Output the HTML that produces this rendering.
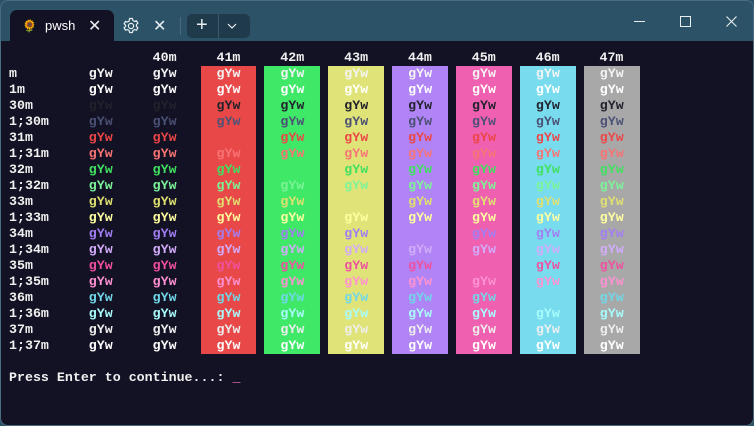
<!DOCTYPE html>
<html><head><meta charset="utf-8"><style>
html,body{margin:0;padding:0;width:754px;height:426px;overflow:hidden;background:#2b5266;}
.win{position:absolute;left:0;top:0;width:752px;height:424px;border:1px solid #4a6c7e;border-radius:8px;background:#2b5266;overflow:hidden;}
.term{position:absolute;left:0;top:40px;width:752px;height:384px;background:#131124;}
.tab{position:absolute;left:9px;top:9px;width:104px;height:32px;background:#131124;border-radius:7px 7px 0 0;}
.tab .t{position:absolute;left:35px;top:8px;color:#fff;font:13px "Liberation Sans",sans-serif;}
.ui{position:absolute;color:#e8eef2;font:15px "Liberation Sans",sans-serif;}
.plus{position:absolute;left:186px;top:13px;width:63px;height:24px;background:#1f3a4a;border-radius:5px;}
pre{position:absolute;left:8px;top:49px;margin:0;font:bold 13.3px/16px "Liberation Mono",monospace;color:#f0f0f0;}
i{font-style:normal}s{text-decoration:none;display:inline-block;height:16px;vertical-align:top}
.a1{background:#e84848}.a2{background:#40e868}.a3{background:#e0e478}.a4{background:#b084f4}.a5{background:#f060b0}.a6{background:#78dcee}.a7{background:#a8a8a8}
.d{color:#f4f4f4}.D{color:#fff}.k0{color:#21222c}.k1{color:#4b5075}.r0{color:#ec4646}.r1{color:#f87474}.g0{color:#40e060}.g1{color:#7cf498}.y0{color:#e0e070}.y1{color:#ffffa0}.b0{color:#a27ef2}.b1{color:#d2acfa}.m0{color:#f050a0}.m1{color:#ff92d2}.c0{color:#70d8e8}.c1{color:#a8fcfc}.w0{color:#eeeeee}.w1{color:#ffffff}
</style></head><body><div class="win">
<div class="tab"><span style="position:absolute;left:12px;top:9px;font-size:12px">🌻</span><span class="t">pwsh</span><span class="ui" style="left:78px;top:6px;font-size:16px">✕</span></div>
<svg style="position:absolute;left:121px;top:16px" width="18" height="18" viewBox="0 0 18 18"><circle cx="9" cy="9" r="2.6" fill="none" stroke="#e8eef2" stroke-width="1.2"/><path d="M7.6 1.5h2.8l.5 2 1.6.9 2-.6 1.4 2.4-1.5 1.4v1.8l1.5 1.4-1.4 2.4-2-.6-1.6.9-.5 2H7.6l-.5-2-1.6-.9-2 .6-1.4-2.4 1.5-1.4V8.2L2.1 6.8l1.4-2.4 2 .6 1.6-.9z" fill="none" stroke="#e8eef2" stroke-width="1.2"/></svg>
<span class="ui" style="left:152px;top:15px;font-size:16px">✕</span>
<div style="position:absolute;left:179px;top:16px;width:1px;height:18px;background:#4a6a7a"></div>
<div class="plus"><span class="ui" style="left:9px;top:0px;font-size:20px">+</span><div style="position:absolute;left:31px;top:0;width:1px;height:24px;background:#3d5a6a"></div><svg style="position:absolute;left:40px;top:9px" width="10" height="6"><path d="M1 1l4 4 4-4" fill="none" stroke="#e8eef2" stroke-width="1.2"/></svg></div>
<div style="position:absolute;left:633px;top:20px;width:11px;height:1px;background:#e8eef2"></div>
<div style="position:absolute;left:679px;top:15px;width:9px;height:9px;border:1px solid #e8eef2"></div>
<svg style="position:absolute;left:725px;top:15px" width="11" height="11"><path d="M0.5 0.5l10 10M10.5 0.5l-10 10" stroke="#e8eef2" stroke-width="1.1"/></svg>
<div class="term"></div>
<pre>                  40m     41m     42m     43m     44m     45m     46m     47m
m         <i class=d>gYw</i>     <i class=d>gYw</i>   <s class=a1>  <i class=d>gYw</i>  </s> <s class=a2>  <i class=d>gYw</i>  </s> <s class=a3>  <i class=d>gYw</i>  </s> <s class=a4>  <i class=d>gYw</i>  </s> <s class=a5>  <i class=d>gYw</i>  </s> <s class=a6>  <i class=d>gYw</i>  </s> <s class=a7>  <i class=d>gYw</i>  </s>
1m        <i class=D>gYw</i>     <i class=D>gYw</i>   <s class=a1>  <i class=D>gYw</i>  </s> <s class=a2>  <i class=D>gYw</i>  </s> <s class=a3>  <i class=D>gYw</i>  </s> <s class=a4>  <i class=D>gYw</i>  </s> <s class=a5>  <i class=D>gYw</i>  </s> <s class=a6>  <i class=D>gYw</i>  </s> <s class=a7>  <i class=D>gYw</i>  </s>
30m       <i class=k0>gYw</i>     <i class=k0>gYw</i>   <s class=a1>  <i class=k0>gYw</i>  </s> <s class=a2>  <i class=k0>gYw</i>  </s> <s class=a3>  <i class=k0>gYw</i>  </s> <s class=a4>  <i class=k0>gYw</i>  </s> <s class=a5>  <i class=k0>gYw</i>  </s> <s class=a6>  <i class=k0>gYw</i>  </s> <s class=a7>  <i class=k0>gYw</i>  </s>
1;30m     <i class=k1>gYw</i>     <i class=k1>gYw</i>   <s class=a1>  <i class=k1>gYw</i>  </s> <s class=a2>  <i class=k1>gYw</i>  </s> <s class=a3>  <i class=k1>gYw</i>  </s> <s class=a4>  <i class=k1>gYw</i>  </s> <s class=a5>  <i class=k1>gYw</i>  </s> <s class=a6>  <i class=k1>gYw</i>  </s> <s class=a7>  <i class=k1>gYw</i>  </s>
31m       <i class=r0>gYw</i>     <i class=r0>gYw</i>   <s class=a1>       </s> <s class=a2>  <i class=r0>gYw</i>  </s> <s class=a3>  <i class=r0>gYw</i>  </s> <s class=a4>  <i class=r0>gYw</i>  </s> <s class=a5>  <i class=r0>gYw</i>  </s> <s class=a6>  <i class=r0>gYw</i>  </s> <s class=a7>  <i class=r0>gYw</i>  </s>
1;31m     <i class=r1>gYw</i>     <i class=r1>gYw</i>   <s class=a1>  <i class=r1>gYw</i>  </s> <s class=a2>  <i class=r1>gYw</i>  </s> <s class=a3>  <i class=r1>gYw</i>  </s> <s class=a4>  <i class=r1>gYw</i>  </s> <s class=a5>  <i class=r1>gYw</i>  </s> <s class=a6>  <i class=r1>gYw</i>  </s> <s class=a7>  <i class=r1>gYw</i>  </s>
32m       <i class=g0>gYw</i>     <i class=g0>gYw</i>   <s class=a1>  <i class=g0>gYw</i>  </s> <s class=a2>       </s> <s class=a3>  <i class=g0>gYw</i>  </s> <s class=a4>  <i class=g0>gYw</i>  </s> <s class=a5>  <i class=g0>gYw</i>  </s> <s class=a6>  <i class=g0>gYw</i>  </s> <s class=a7>  <i class=g0>gYw</i>  </s>
1;32m     <i class=g1>gYw</i>     <i class=g1>gYw</i>   <s class=a1>  <i class=g1>gYw</i>  </s> <s class=a2>  <i class=g1>gYw</i>  </s> <s class=a3>  <i class=g1>gYw</i>  </s> <s class=a4>  <i class=g1>gYw</i>  </s> <s class=a5>  <i class=g1>gYw</i>  </s> <s class=a6>  <i class=g1>gYw</i>  </s> <s class=a7>  <i class=g1>gYw</i>  </s>
33m       <i class=y0>gYw</i>     <i class=y0>gYw</i>   <s class=a1>  <i class=y0>gYw</i>  </s> <s class=a2>  <i class=y0>gYw</i>  </s> <s class=a3>       </s> <s class=a4>  <i class=y0>gYw</i>  </s> <s class=a5>  <i class=y0>gYw</i>  </s> <s class=a6>  <i class=y0>gYw</i>  </s> <s class=a7>  <i class=y0>gYw</i>  </s>
1;33m     <i class=y1>gYw</i>     <i class=y1>gYw</i>   <s class=a1>  <i class=y1>gYw</i>  </s> <s class=a2>  <i class=y1>gYw</i>  </s> <s class=a3>  <i class=y1>gYw</i>  </s> <s class=a4>  <i class=y1>gYw</i>  </s> <s class=a5>  <i class=y1>gYw</i>  </s> <s class=a6>  <i class=y1>gYw</i>  </s> <s class=a7>  <i class=y1>gYw</i>  </s>
34m       <i class=b0>gYw</i>     <i class=b0>gYw</i>   <s class=a1>  <i class=b0>gYw</i>  </s> <s class=a2>  <i class=b0>gYw</i>  </s> <s class=a3>  <i class=b0>gYw</i>  </s> <s class=a4>       </s> <s class=a5>  <i class=b0>gYw</i>  </s> <s class=a6>  <i class=b0>gYw</i>  </s> <s class=a7>  <i class=b0>gYw</i>  </s>
1;34m     <i class=b1>gYw</i>     <i class=b1>gYw</i>   <s class=a1>  <i class=b1>gYw</i>  </s> <s class=a2>  <i class=b1>gYw</i>  </s> <s class=a3>  <i class=b1>gYw</i>  </s> <s class=a4>  <i class=b1>gYw</i>  </s> <s class=a5>  <i class=b1>gYw</i>  </s> <s class=a6>  <i class=b1>gYw</i>  </s> <s class=a7>  <i class=b1>gYw</i>  </s>
35m       <i class=m0>gYw</i>     <i class=m0>gYw</i>   <s class=a1>  <i class=m0>gYw</i>  </s> <s class=a2>  <i class=m0>gYw</i>  </s> <s class=a3>  <i class=m0>gYw</i>  </s> <s class=a4>  <i class=m0>gYw</i>  </s> <s class=a5>       </s> <s class=a6>  <i class=m0>gYw</i>  </s> <s class=a7>  <i class=m0>gYw</i>  </s>
1;35m     <i class=m1>gYw</i>     <i class=m1>gYw</i>   <s class=a1>  <i class=m1>gYw</i>  </s> <s class=a2>  <i class=m1>gYw</i>  </s> <s class=a3>  <i class=m1>gYw</i>  </s> <s class=a4>  <i class=m1>gYw</i>  </s> <s class=a5>  <i class=m1>gYw</i>  </s> <s class=a6>  <i class=m1>gYw</i>  </s> <s class=a7>  <i class=m1>gYw</i>  </s>
36m       <i class=c0>gYw</i>     <i class=c0>gYw</i>   <s class=a1>  <i class=c0>gYw</i>  </s> <s class=a2>  <i class=c0>gYw</i>  </s> <s class=a3>  <i class=c0>gYw</i>  </s> <s class=a4>  <i class=c0>gYw</i>  </s> <s class=a5>  <i class=c0>gYw</i>  </s> <s class=a6>       </s> <s class=a7>  <i class=c0>gYw</i>  </s>
1;36m     <i class=c1>gYw</i>     <i class=c1>gYw</i>   <s class=a1>  <i class=c1>gYw</i>  </s> <s class=a2>  <i class=c1>gYw</i>  </s> <s class=a3>  <i class=c1>gYw</i>  </s> <s class=a4>  <i class=c1>gYw</i>  </s> <s class=a5>  <i class=c1>gYw</i>  </s> <s class=a6>  <i class=c1>gYw</i>  </s> <s class=a7>  <i class=c1>gYw</i>  </s>
37m       <i class=w0>gYw</i>     <i class=w0>gYw</i>   <s class=a1>  <i class=w0>gYw</i>  </s> <s class=a2>  <i class=w0>gYw</i>  </s> <s class=a3>  <i class=w0>gYw</i>  </s> <s class=a4>  <i class=w0>gYw</i>  </s> <s class=a5>  <i class=w0>gYw</i>  </s> <s class=a6>  <i class=w0>gYw</i>  </s> <s class=a7>  <i class=w0>gYw</i>  </s>
1;37m     <i class=w1>gYw</i>     <i class=w1>gYw</i>   <s class=a1>  <i class=w1>gYw</i>  </s> <s class=a2>  <i class=w1>gYw</i>  </s> <s class=a3>  <i class=w1>gYw</i>  </s> <s class=a4>  <i class=w1>gYw</i>  </s> <s class=a5>  <i class=w1>gYw</i>  </s> <s class=a6>  <i class=w1>gYw</i>  </s> <s class=a7>  <i class=w1>gYw</i>  </s>

Press Enter to continue...: <i style="color:#ff79c6">_</i></pre>
</div></body></html>
